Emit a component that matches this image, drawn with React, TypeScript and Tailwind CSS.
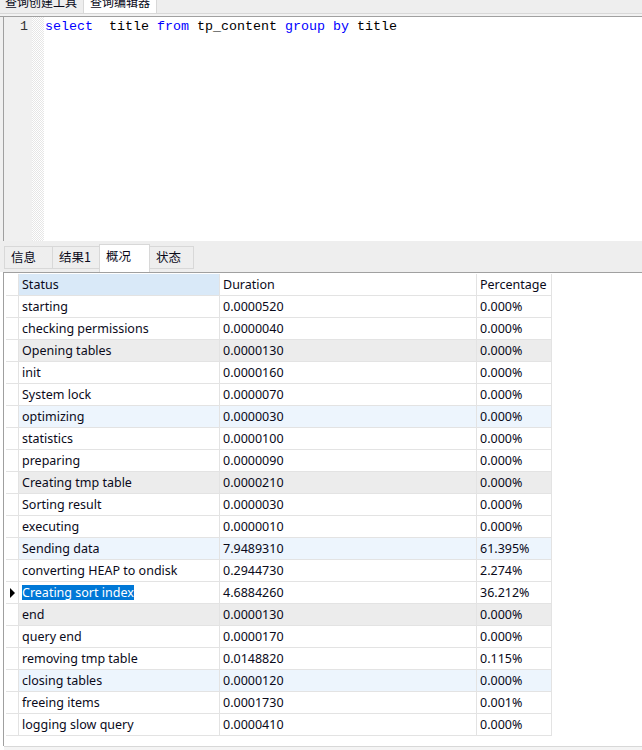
import React from "react";

const rows: [string, string, string][] = [
  ["starting", "0.0000520", "0.000%"],
  ["checking permissions", "0.0000040", "0.000%"],
  ["Opening tables", "0.0000130", "0.000%"],
  ["init", "0.0000160", "0.000%"],
  ["System lock", "0.0000070", "0.000%"],
  ["optimizing", "0.0000030", "0.000%"],
  ["statistics", "0.0000100", "0.000%"],
  ["preparing", "0.0000090", "0.000%"],
  ["Creating tmp table", "0.0000210", "0.000%"],
  ["Sorting result", "0.0000030", "0.000%"],
  ["executing", "0.0000010", "0.000%"],
  ["Sending data", "7.9489310", "61.395%"],
  ["converting HEAP to ondisk", "0.2944730", "2.274%"],
  ["Creating sort index", "4.6884260", "36.212%"],
  ["end", "0.0000130", "0.000%"],
  ["query end", "0.0000170", "0.000%"],
  ["removing tmp table", "0.0148820", "0.115%"],
  ["closing tables", "0.0000120", "0.000%"],
  ["freeing items", "0.0001730", "0.001%"],
  ["logging slow query", "0.0000410", "0.000%"],
];

const SEL = 13;

export default function App() {
  return (
    <div
      className="w-[642px] h-[750px] bg-white overflow-hidden flex flex-col text-[12.5px] text-[#0a0a1a]"
      style={{ fontFamily: '"Noto Sans", "Noto Sans CJK SC", sans-serif' }}
    >
      {/* top tab strip */}
      <div className="h-[13px] bg-[#eeeeee] flex items-end overflow-hidden shrink-0">
        <div className="h-[13px] w-[84px] flex items-end pl-[5px] border-r border-[#d8d8d8]">
          <span className="leading-[18px] mb-[2px] text-[12px] whitespace-nowrap" style={{ fontFamily: '"Noto Sans CJK SC", sans-serif' }}>查询创建工具</span>
        </div>
        <div className="h-[13px] w-[73px] bg-white flex items-end pl-[6px] border-r border-[#d8d8d8]">
          <span className="leading-[18px] mb-[2px] text-[12px] whitespace-nowrap" style={{ fontFamily: '"Noto Sans CJK SC", sans-serif' }}>查询编辑器</span>
        </div>
      </div>
      <div className="h-[1px] bg-[#d8d8d8] shrink-0" />
      <div className="h-[2px] bg-[#f2f2f2] shrink-0" />
      <div className="h-[1px] bg-[#a0a0a0] shrink-0" />

      {/* editor */}
      <div className="h-[224px] flex shrink-0">
        <div className="w-[3px] bg-[#f0f0f0]" />
        <div className="w-[1px] bg-[#a0a0a0]" />
        <div className="w-[28px] bg-[#f0f0f0] flex justify-end pr-[4px] pt-[1px]">
          <span className="text-[13.33px] leading-[18px] text-[#333]" style={{ fontFamily: '"Liberation Mono", monospace' }}>1</span>
        </div>
        <div className="w-[12px] bg-[repeating-conic-gradient(#e6e6e6_0_25%,#ffffff_0_50%)] bg-[length:2px_2px]" />
        <div className="flex-1 pl-[1px] pt-[1px]">
          <pre className="text-[13.33px] leading-[18px] m-0" style={{ fontFamily: '"Liberation Mono", monospace' }}>
            <span className="text-[#0000ff]">select</span>
            <span className="text-black">{"  title "}</span>
            <span className="text-[#0000ff]">from</span>
            <span className="text-black">{" tp_content "}</span>
            <span className="text-[#0000ff]">group</span>
            <span className="text-black"> </span>
            <span className="text-[#0000ff]">by</span>
            <span className="text-black"> title</span>
          </pre>
        </div>
      </div>

      {/* result tabs */}
      <div className="h-[31px] bg-[#eeeeee] flex items-end pl-[4px] shrink-0 text-[12.5px]" style={{ fontFamily: '"Noto Sans CJK SC", sans-serif' }}>
        <div className="h-[23px] w-[48px] border border-[#d8d8d8] border-r-0 flex items-center pl-[6px] mb-[3px] box-border">信息</div>
        <div className="h-[23px] w-[47px] border border-[#d8d8d8] border-r-0 flex items-center pl-[6px] mb-[3px] box-border">结果1</div>
        <div className="h-[28px] w-[51px] border border-[#d8d8d8] border-b-0 bg-white flex items-start pt-[2px] pl-[6px] box-border">概况</div>
        <div className="h-[23px] w-[44px] border border-[#d8d8d8] border-l-0 flex items-center pl-[6px] mb-[3px] box-border">状态</div>
      </div>
      <div className="h-[1px] bg-[#a0a0a0] ml-[3px] shrink-0" />

      {/* grid area */}
      <div className="flex-1 flex ml-[3px] shrink-0">
        <div className="w-[1px] h-[473px] bg-[#a0a0a0]" />
        <div className="flex-1 flex flex-col">
          <div className="h-[473px] bg-white pl-[2px] pt-[1px]">
            <div className="flex flex-col">
              <div className="flex h-[22px]">
                <div className="w-[13px] border-r border-b border-[#e3e3e3] box-border" />
                <div className="w-[201px] bg-[#d9e9f8] border-r border-b border-[#e3e3e3] box-border px-[3px] leading-[21px]">Status</div>
                <div className="w-[257px] border-r border-b border-[#e3e3e3] box-border px-[3px] leading-[21px]">Duration</div>
                <div className="w-[75px] border-r border-b border-[#e3e3e3] box-border px-[3px] leading-[21px]">Percentage</div>
              </div>
              {rows.map((r, i) => {
                const bg = i % 3 === 2 ? (i % 6 === 2 ? "bg-[#ececec]" : "bg-[#edf5fd]") : "bg-white";
                return (
                  <div key={i} className="flex h-[22px]">
                    <div className="w-[13px] border-r border-b border-[#e3e3e3] box-border bg-white flex items-center justify-center">
                      {i === SEL && (
                        <svg width="7" height="10" viewBox="0 0 7 10">
                          <path d="M1 0 L6 5 L1 10 Z" fill="#000" />
                        </svg>
                      )}
                    </div>
                    <div className={`w-[201px] ${bg} border-r border-b border-[#e3e3e3] box-border px-[3px] leading-[21px] whitespace-nowrap`}>
                      {i === SEL ? (
                        <span className="bg-[#0078d7] text-white inline-block leading-[15px]">{r[0]}</span>
                      ) : (
                        r[0]
                      )}
                    </div>
                    <div className={`w-[257px] ${bg} border-r border-b border-[#e3e3e3] box-border px-[3px] leading-[21px]`}>{r[1]}</div>
                    <div className={`w-[75px] ${bg} border-r border-b border-[#e3e3e3] box-border px-[3px] leading-[21px]`}>{r[2]}</div>
                  </div>
                );
              })}
            </div>
          </div>
          <div className="h-[1px] bg-[#d8d8d8]" />
          <div className="flex-1 bg-[#f4f4f4]" />
        </div>
      </div>
    </div>
  );
}
